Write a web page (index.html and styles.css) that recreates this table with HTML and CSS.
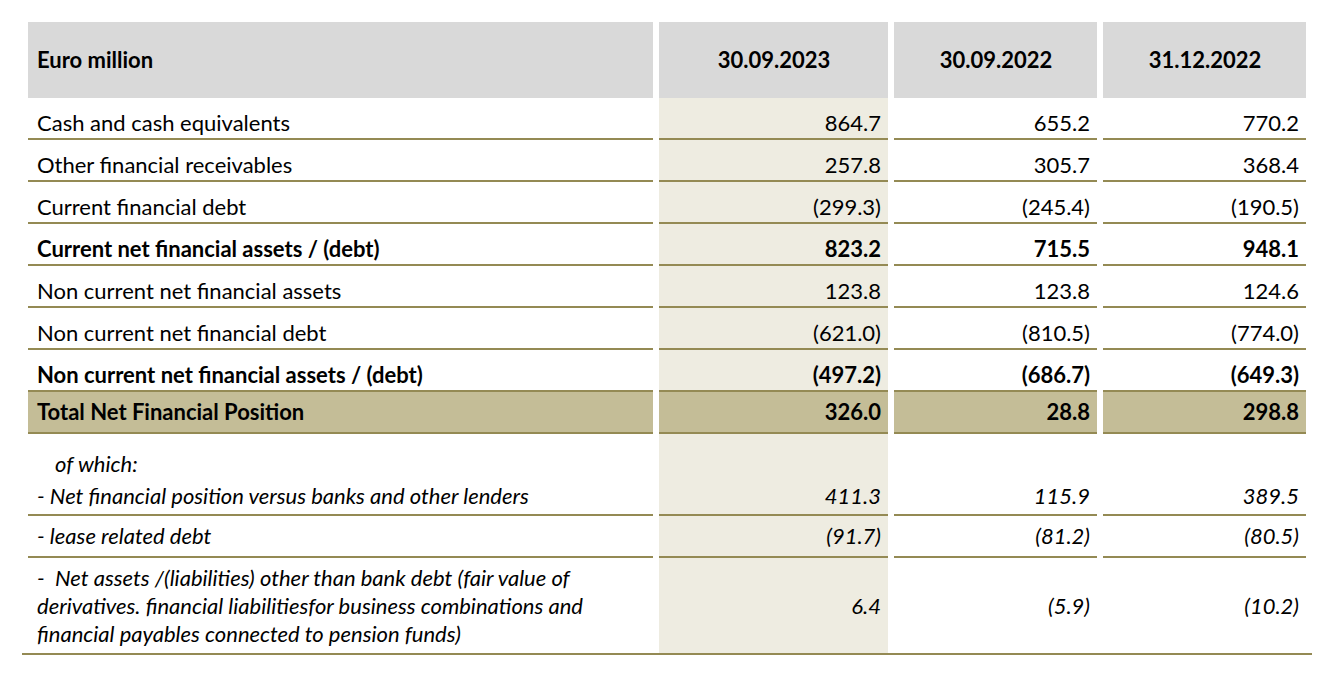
FILE: index.html
```html
<!DOCTYPE html>
<html lang="en">
<head>
<meta charset="utf-8">
<title>Net Financial Position</title>
<link rel="stylesheet" href="styles.css">
</head>
<body>
<table class="nfp">
  <colgroup>
    <col class="c-label">
    <col class="c-num1">
    <col class="c-num">
    <col class="c-num">
  </colgroup>
  <thead>
    <tr class="head">
      <th class="label">Euro million</th>
      <th class="date">30.09.2023</th>
      <th class="date">30.09.2022</th>
      <th class="date">31.12.2022</th>
    </tr>
  </thead>
  <tbody>
    <tr class="row">
      <td class="label">Cash and cash equivalents</td>
      <td class="num cur">864.7</td>
      <td class="num">655.2</td>
      <td class="num">770.2</td>
    </tr>
    <tr class="row">
      <td class="label">Other financial receivables</td>
      <td class="num cur">257.8</td>
      <td class="num">305.7</td>
      <td class="num">368.4</td>
    </tr>
    <tr class="row">
      <td class="label">Current financial debt</td>
      <td class="num cur">(299.3)</td>
      <td class="num">(245.4)</td>
      <td class="num">(190.5)</td>
    </tr>
    <tr class="row strong">
      <td class="label">Current net financial assets / (debt)</td>
      <td class="num cur">823.2</td>
      <td class="num">715.5</td>
      <td class="num">948.1</td>
    </tr>
    <tr class="row">
      <td class="label">Non current net financial assets</td>
      <td class="num cur">123.8</td>
      <td class="num">123.8</td>
      <td class="num">124.6</td>
    </tr>
    <tr class="row">
      <td class="label">Non current net financial debt</td>
      <td class="num cur">(621.0)</td>
      <td class="num">(810.5)</td>
      <td class="num">(774.0)</td>
    </tr>
    <tr class="row strong">
      <td class="label">Non current net financial assets / (debt)</td>
      <td class="num cur">(497.2)</td>
      <td class="num">(686.7)</td>
      <td class="num">(649.3)</td>
    </tr>
    <tr class="total">
      <td class="label">Total Net Financial Position</td>
      <td class="num">326.0</td>
      <td class="num">28.8</td>
      <td class="num">298.8</td>
    </tr>
    <tr class="sub which">
      <td class="label indent">of which:</td>
      <td class="num cur"></td>
      <td class="num"></td>
      <td class="num"></td>
    </tr>
    <tr class="sub lined short">
      <td class="label">- Net financial position versus banks and other lenders</td>
      <td class="num cur">411.3</td>
      <td class="num">115.9</td>
      <td class="num">389.5</td>
    </tr>
    <tr class="sub lined">
      <td class="label">- lease related debt</td>
      <td class="num cur">(91.7)</td>
      <td class="num">(81.2)</td>
      <td class="num">(80.5)</td>
    </tr>
    <tr class="sub last">
      <td class="label">-&nbsp; Net assets /(liabilities) other than bank debt (fair value of<br>derivatives. financial liabilitiesfor business combinations and<br>financial payables connected to pension funds)</td>
      <td class="num cur">6.4</td>
      <td class="num">(5.9)</td>
      <td class="num">(10.2)</td>
    </tr>
  </tbody>
</table>
</body>
</html>
```

FILE: styles.css
```css
html, body {
  margin: 0;
  padding: 0;
  background: #ffffff;
}

body {
  font-family: Lato, "Open Sans", "Liberation Sans", sans-serif;
  color: #000000;
}

.nfp {
  margin: 22px 0 0 22px;
  width: 1290px;
  table-layout: fixed;
  border-collapse: separate;
  border-spacing: 6px 0;
  border-bottom: 2px solid #948a54;
  font-size: 22px;
  line-height: 28px;
}

.c-label { width: 625px; }
.c-num1 { width: 229px; }
.c-num { width: 203px; }

.nfp th,
.nfp td {
  padding-top: 0;
  padding-bottom: 0;
  box-sizing: content-box;
}

.nfp .label {
  padding-left: 9px;
  padding-right: 0;
  text-align: left;
  white-space: nowrap;
}

.nfp .label.indent {
  padding-left: 27px;
}

.nfp .num {
  padding-left: 0;
  padding-right: 7px;
  text-align: right;
}

.nfp .cur {
  background: #eeece1;
}

.head th {
  height: 76px;
  background: #d9d9d9;
  font-weight: 700;
  vertical-align: middle;
}

.nfp .head .date {
  text-align: center;
  padding-right: 0;
}

.row td {
  height: 39px;
  vertical-align: bottom;
  padding-bottom: 1px;
  border-bottom: 2px solid #948a54;
}

.strong td {
  font-weight: 700;
}

.nfp .total td {
  height: 40px;
  background: #c4bd97;
  font-weight: 700;
  vertical-align: middle;
  border-bottom: 2px solid #948a54;
}

.sub td {
  font-style: italic;
}

.which td {
  height: 44px;
  vertical-align: bottom;
}

.lined td {
  height: 40px;
  vertical-align: middle;
  border-bottom: 2px solid #948a54;
}

.lined.short td {
  height: 36px;
}

.last td {
  height: 95px;
  vertical-align: middle;
}
```
